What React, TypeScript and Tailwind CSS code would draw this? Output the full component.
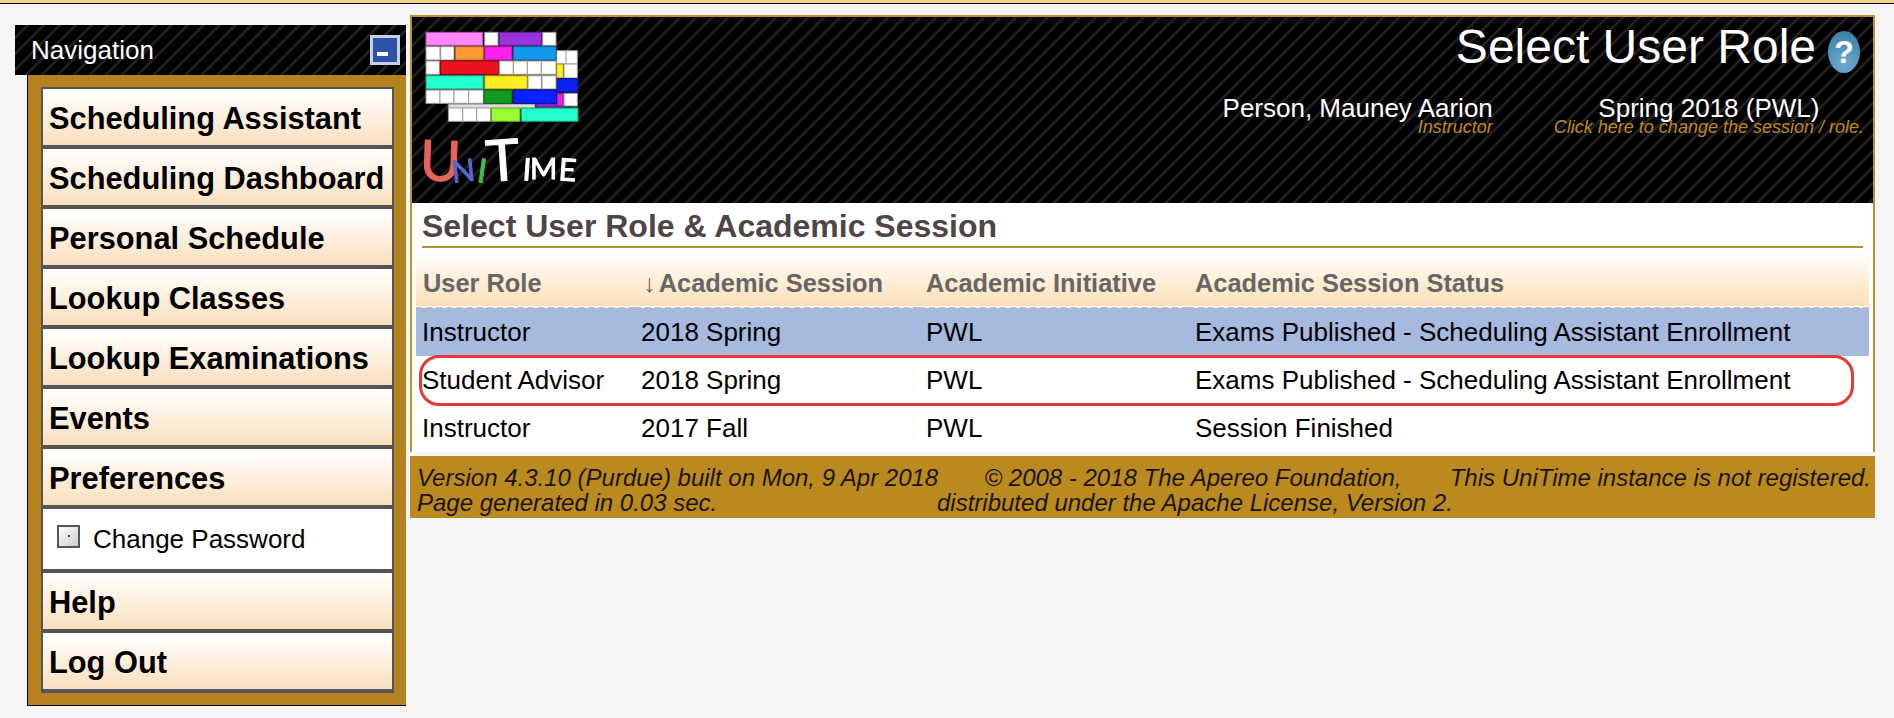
const stripes =
  "bg-[repeating-linear-gradient(135deg,#000_0px,#000_7px,#2a2a2a_9px,#000_11.3px)]";

const navTop = [
  "Scheduling Assistant",
  "Scheduling Dashboard",
  "Personal Schedule",
  "Lookup Classes",
  "Lookup Examinations",
  "Events",
  "Preferences",
];

const rows = [
  { role: "Instructor", session: "2018 Spring", status: "Exams Published - Scheduling Assistant Enrollment", selected: true },
  { role: "Student Advisor", session: "2018 Spring", status: "Exams Published - Scheduling Assistant Enrollment", selected: false },
  { role: "Instructor", session: "2017 Fall", status: "Session Finished", selected: false },
];

// x, y, w, h, fill, stroke -- in logo space (3 units per pixel)
const logoCells: [number, number, number, number, string, string][] = [
  // back sheet
  [145, 312, 260, 14, "#dddddd", "#888888"],
  [408, 308, 82, 14, "#8a22c8", "#551188"],
  [470, 152, 30, 40, "#ffffff", "#999999"],
  [498, 152, 34, 40, "#ffffff", "#999999"],
  [470, 192, 20, 42, "#ffee22", "#998800"],
  [492, 192, 40, 42, "#ffffff", "#999999"],
  [470, 236, 64, 40, "#0a22ee", "#001188"],
  [470, 280, 20, 38, "#e022d8", "#881188"],
  [492, 280, 40, 38, "#ffffff", "#999999"],
  [145, 324, 43, 40, "#ffffff", "#999999"],
  [188, 324, 42, 40, "#ffffff", "#999999"],
  [230, 324, 42, 40, "#ffffff", "#999999"],
  [274, 324, 86, 40, "#99ff33", "#669922"],
  [364, 324, 170, 40, "#22ffcc", "#119977"],
  // front sheet
  [78, 97, 170, 39, "#ff88ff", "#aa55aa"],
  [254, 97, 40, 39, "#ffffff", "#999999"],
  [298, 97, 126, 39, "#9933dd", "#662299"],
  [428, 97, 40, 39, "#ffffff", "#999999"],
  [78, 140, 42, 40, "#ffffff", "#999999"],
  [122, 140, 40, 40, "#ffffff", "#999999"],
  [166, 140, 84, 40, "#ff9933", "#aa6622"],
  [254, 140, 82, 40, "#ff22ee", "#aa1199"],
  [340, 140, 128, 40, "#1199ee", "#0a6699"],
  [78, 183, 40, 40, "#ffffff", "#999999"],
  [122, 183, 174, 40, "#ee1122", "#990a11"],
  [298, 183, 42, 40, "#ffffff", "#999999"],
  [340, 183, 42, 40, "#ffffff", "#999999"],
  [382, 183, 42, 40, "#ffffff", "#999999"],
  [424, 183, 44, 40, "#ffffff", "#999999"],
  [78, 227, 172, 40, "#22ffcc", "#119977"],
  [254, 227, 128, 40, "#ffee22", "#998800"],
  [384, 227, 40, 40, "#ffffff", "#999999"],
  [426, 227, 42, 40, "#ffffff", "#999999"],
  [78, 270, 42, 40, "#ffffff", "#999999"],
  [120, 270, 42, 40, "#ffffff", "#999999"],
  [162, 270, 44, 40, "#ffffff", "#999999"],
  [206, 270, 44, 40, "#ffffff", "#999999"],
  [252, 270, 84, 40, "#119922", "#0a6611"],
  [340, 270, 130, 40, "#0a22ff", "#001199"],
];

// letter, x, baseline, size, colour, tilt
const logoLetters: [string, number, number, number, string, number][] = [
  ["U", 58, 540, 168, "#e8645a", 2],
  ["N", 158, 548, 92, "#5a66cc", -6],
  ["I", 228, 545, 100, "#44bb44", 8],
  ["T", 262, 545, 172, "#ffffff", -4],
  ["I", 366, 540, 92, "#ffffff", 4],
  ["M", 390, 538, 88, "#ffffff", 0],
  ["E", 474, 540, 92, "#ffffff", 4],
];

function Logo() {
  return (
    <svg width="162" height="172" viewBox="60 84 486 516" className="blur-[0.4px]">
      {logoCells.map(([x, y, w, h, fill, stroke], i) => (
        <rect key={i} x={x} y={y} width={w} height={h} fill={fill} stroke={stroke} strokeWidth="3" />
      ))}
      <g fontFamily="Lato, sans-serif">
        {logoLetters.map(([ch, x, y, size, color, tilt], i) => (
          <text
            key={i}
            x={x}
            y={y}
            fontSize={size}
            fill={color}
            stroke={color}
            strokeWidth="3"
            strokeLinejoin="round"
            transform={`rotate(${tilt} ${x} ${y})`}
          >
            {ch}
          </text>
        ))}
      </g>
    </svg>
  );
}

function HelpIcon() {
  return (
    <div className="ml-3 mt-[8px] flex h-[42px] w-[32px] items-center justify-center rounded-[50%] bg-[radial-gradient(circle_at_50%_80%,#6ea9cd,#4a8cb6_65%,#3a7aa6)] text-[32px] font-bold leading-none text-white">
      ?
    </div>
  );
}

function NavItem({ label }: { label: string }) {
  return (
    <div className="flex h-14 items-center bg-gradient-to-b from-white to-[#f9dfbd] pl-[6px] pt-1 text-[30.8px] font-bold text-black">
      {label}
    </div>
  );
}

export default function App() {
  return (
    <div className="min-h-[718px] bg-[#f5f5f5] font-['Liberation_Sans',Arial,sans-serif]">
      <div className="h-1 border-b border-black bg-[#f5d58a]" />
      <div className="flex items-start">
        {/* sidebar */}
        <aside className="ml-[15px] mt-[21px] w-[391px] shrink-0">
          <div className={`flex h-[50px] items-center justify-between pl-4 pr-[6px] text-[26px] text-white ${stripes}`}>
            <span>Navigation</span>
            <div className="flex h-[30px] w-[30px] items-end border-[3px] border-[#c8d0e4] bg-[#2d52a8] pb-[6px] pl-[4px]">
              <div className="h-1 w-[11px] bg-white" />
            </div>
          </div>
          <div className="ml-3 border-b border-l border-black bg-[#b58220] pb-3 pl-[13px] pr-3 pt-3">
            <div className="flex flex-col gap-1 border-x-2 border-b-4 border-t-2 border-[#555555] bg-[#555555]">
              {navTop.map((label) => (
                <NavItem key={label} label={label} />
              ))}
              <div className="flex h-[60px] items-center bg-white pl-[14px] pt-[1px] text-[26px] text-black">
                <div className="mb-[7px] flex h-[23px] w-[23px] items-center justify-center border-2 border-[#555555] bg-gradient-to-br from-white to-[#cccccc]">
                  <div className="h-[2px] w-[2px] bg-[#444444]" />
                </div>
                <span className="ml-[13px]">Change Password</span>
              </div>
              <NavItem label="Help" />
              <NavItem label="Log Out" />
            </div>
          </div>
        </aside>

        {/* main panel */}
        <main className="ml-1 mt-[11px] w-[1465px] shrink-0">
          <div className="border-x-2 border-t-2 border-[#b8912f] bg-white">
            <header className={`flex h-[186px] justify-between pl-2 pt-[11px] ${stripes}`}>
              <Logo />
              <div className="-mt-[11px] flex flex-col items-end pr-[9px] pt-[6px] text-white">
                <div className="flex items-start pr-1">
                  <h1 className="text-[48px] leading-[48px]">Select User Role</h1>
                  <HelpIcon />
                </div>
                <div className="mt-[22px] flex gap-[61px]">
                  <div className="text-right">
                    <div className="text-[26px] leading-[26px]">Person, Mauney Aarion</div>
                    <div className="-mt-[3px] text-[18px] italic leading-[18px] text-[#c08a1e]">Instructor</div>
                  </div>
                  <div className="text-center">
                    <div className="text-[26px] leading-[26px]">Spring 2018 (PWL)</div>
                    <div className="-mt-[3px] text-[18px] italic leading-[18px] text-[#c08a1e]">
                      Click here to change the session / role.
                    </div>
                  </div>
                </div>
              </div>
            </header>

            <h2 className="mx-[10px] border-b-2 border-[#b8912f] pb-1 pt-[7px] text-[32px] font-bold leading-8 text-[#4f4545]">
              Select User Role &amp; Academic Session
            </h2>

            <div className="relative mx-1 mb-1 mt-[2px]">
              <table className="w-full table-fixed text-left text-[26px] text-black">
                <colgroup>
                  <col className="w-[219px]" />
                  <col className="w-[284px]" />
                  <col className="w-[269px]" />
                  <col />
                </colgroup>
                <thead>
                  <tr className="h-[58px] border-b-2 border-dashed border-[#bbbbbb] bg-gradient-to-b from-white to-[#fce0b8] text-[25.4px] text-[#666666]">
                    <th className="pl-[7px] pt-[10px] font-bold">User Role</th>
                    <th className="pl-[8px] pt-[10px] font-bold">
                      <span className="mr-[3px]">↓</span>Academic Session
                    </th>
                    <th className="pl-[7px] pt-[10px] font-bold">Academic Initiative</th>
                    <th className="pl-[7px] pt-[10px] font-bold">Academic Session Status</th>
                  </tr>
                </thead>
                <tbody>
                  {rows.map((r) => (
                    <tr key={r.role + r.session} className={r.selected ? "h-12 bg-[#a6b9de]" : "h-12"}>
                      <td className="pl-[6px]">{r.role}</td>
                      <td className="pl-[6px]">{r.session}</td>
                      <td className="pl-[7px]">PWL</td>
                      <td className="pl-[7px]">{r.status}</td>
                    </tr>
                  ))}
                </tbody>
              </table>
              {/* red annotation around the second row */}
              <div className="pointer-events-none absolute left-[3px] top-[105px] h-[51px] w-[1435px] rounded-[20px] border-[3px] border-[#e53935]" />
            </div>
          </div>

          <footer className="grid h-[62px] grid-cols-[520px_512px_1fr] bg-[#bb8a1e] pl-[7px] pr-[4px] pt-[9px] text-[24px] italic leading-[25px] text-[#1a1408]">
            <div className="whitespace-nowrap">
              <div>Version 4.3.10 (Purdue) built on Mon, 9 Apr 2018</div>
              <div>Page generated in 0.03 sec.</div>
            </div>
            <div className="whitespace-nowrap text-center">
              <div>© 2008 - 2018 The Apereo Foundation,</div>
              <div>distributed under the Apache License, Version 2.</div>
            </div>
            <div className="whitespace-nowrap text-right">This UniTime instance is not registered.</div>
          </footer>
        </main>
      </div>
    </div>
  );
}
